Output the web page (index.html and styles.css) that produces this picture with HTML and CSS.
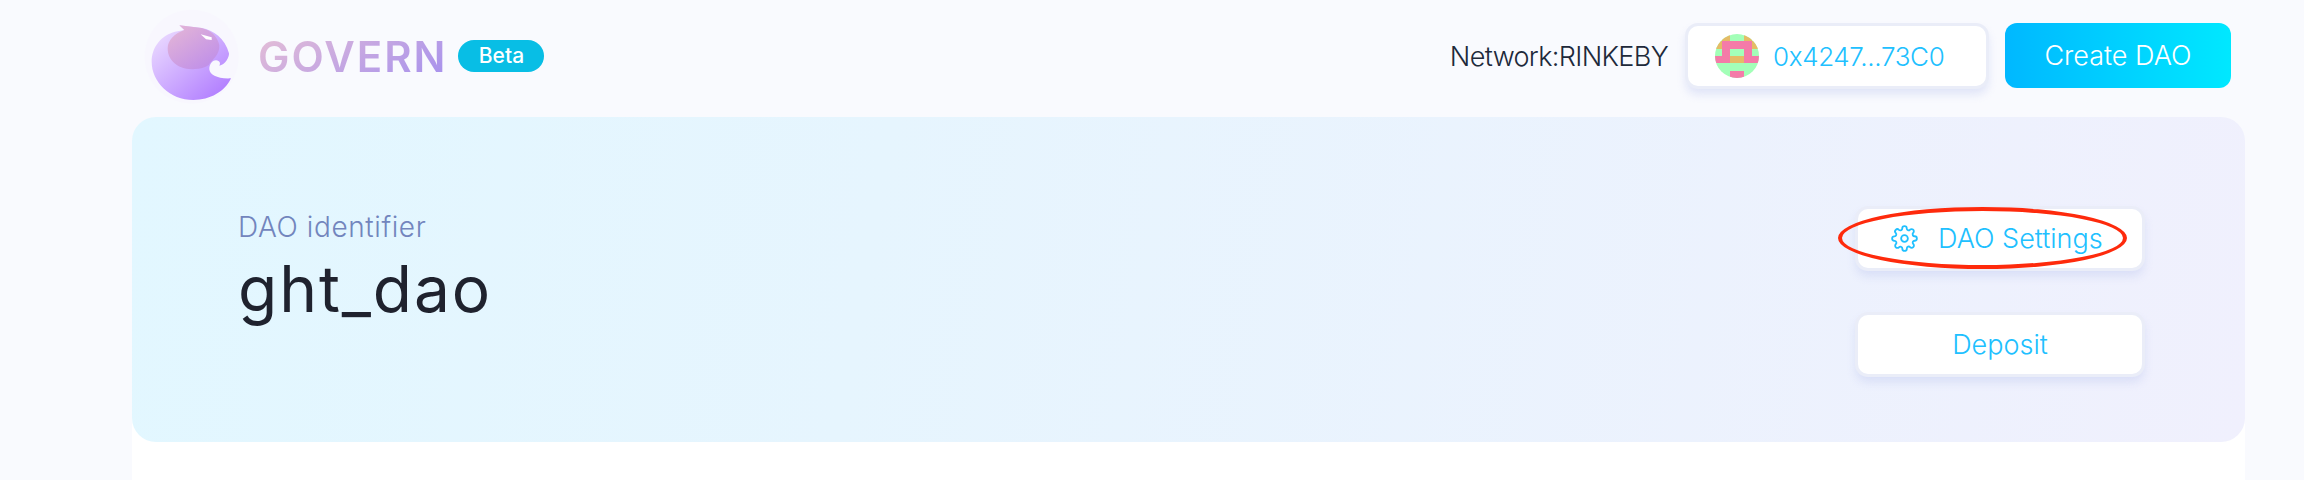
FILE: index.html
```html
<!DOCTYPE html>
<html lang="en">
<head>
<meta charset="utf-8">
<title>Govern</title>
<link rel="stylesheet" href="styles.css">
</head>
<body>
<div class="page">
  <header class="topbar">
    <div class="brand">
      <svg class="logo" viewBox="30 24 300 300" aria-hidden="true">
        <defs>
          <linearGradient id="sphere" x1="0.1" y1="0.15" x2="0.85" y2="0.95">
            <stop offset="0" stop-color="#e8d6ff"/>
            <stop offset="1" stop-color="#b27fff"/>
          </linearGradient>
          <linearGradient id="head" x1="0.1" y1="0" x2="0.9" y2="1">
            <stop offset="0" stop-color="#e4b6d6"/>
            <stop offset="1" stop-color="#bd8cea"/>
          </linearGradient>
        </defs>
        <circle cx="185" cy="170" r="141" fill="#f8f7fe"/>
        <path fill="url(#sphere)" d="M148 76 L215 84 C250 90 285 115 297 160 C298 172 285 195 268 197 C272 190 270 182 258 181 C245 181 238 195 238 208 C240 225 262 237 303 235 C285 275 240 300 190 300 C120 300 65 245 65 185 C65 140 95 105 135 95 L163 90 Z"/>
        <path fill="url(#head)" d="M148 76 L215 84 C245 92 262 110 268 135 C270 165 245 180 236 195 C225 203 210 207 195 207 C150 212 113 185 113 145 C113 120 135 100 163 90 Z"/>
        <path fill="#fff" d="M212 103 L245 112 L245 120 L228 118 Z"/>
      </svg>
      <span class="wordmark">GOVERN</span>
      <span class="beta">Beta</span>
    </div>
    <div class="actions">
      <span class="network">Network:RINKEBY</span>
      <button class="btn wallet">
        <svg class="avatar" viewBox="0 0 6 6" aria-hidden="true" shape-rendering="crispEdges">
          <rect width="6" height="6" fill="#a3ffb8"/>
          <path fill="#e5bc66" d="M1 0h1v1H1zM4 0h1v1H4zM0 1h1v1H0zM5 1h1v1H5zM2 3h2v1H2z"/>
          <path fill="#f47ba8" d="M1 1h4v1H1zM1 2h1v1H1zM4 2h1v1H4zM0 3h2v1H0zM4 3h2v1H4zM2 5h2v1H2z"/>
        </svg>
        <span>0x4247...73C0</span>
      </button>
      <button class="create">Create DAO</button>
    </div>
  </header>
  <main class="content">
    <section class="panel">
      <div class="identity">
        <div class="label">DAO identifier</div>
        <h1 class="dao-name">ght_dao</h1>
      </div>
      <div class="panel-actions">
        <button class="btn panel-btn settings">
          <svg class="gear" viewBox="0 0 24 24" fill="none" stroke="currentColor" stroke-width="1.6" stroke-linecap="round" stroke-linejoin="round" aria-hidden="true">
            <circle cx="12" cy="12" r="3"/>
            <path d="M19.4 15a1.65 1.65 0 0 0 .33 1.82l.06.06a2 2 0 1 1-2.83 2.83l-.06-.06a1.65 1.65 0 0 0-2.82 1.17V21a2 2 0 1 1-4 0v-.09A1.65 1.65 0 0 0 9 19.4a1.65 1.65 0 0 0-1.82.33l-.06.06a2 2 0 1 1-2.83-2.83l.06-.06a1.65 1.65 0 0 0-1.17-2.82H3a2 2 0 1 1 0-4h.09A1.65 1.65 0 0 0 4.6 9a1.65 1.65 0 0 0-.33-1.82l-.06-.06a2 2 0 1 1 2.83-2.83l.06.06A1.65 1.65 0 0 0 9 4.6h.09A1.65 1.65 0 0 0 10 3.09V3a2 2 0 1 1 4 0v.09a1.65 1.65 0 0 0 2.82 1.17l.06-.06a2 2 0 1 1 2.83 2.83l-.06.06A1.65 1.65 0 0 0 19.4 9v.09A1.65 1.65 0 0 0 20.91 10H21a2 2 0 1 1 0 4h-.09A1.65 1.65 0 0 0 19.4 15z"/>
          </svg>
          <span>DAO Settings</span>
          <span class="annotation"></span>
        </button>
        <button class="btn panel-btn">Deposit</button>
      </div>
    </section>
  </main>
</div>
</body>
</html>
```
FILE: styles.css
```css
* { box-sizing: border-box; }
html, body { margin: 0; height: 100%; }
body {
  background: #f9fafe;
  font-family: Inter, "Liberation Sans", sans-serif;
  overflow: hidden;
}
.page {
  height: 480px;
  display: flex;
  flex-direction: column;
  padding: 0 59px 0 132px;
}
.topbar {
  height: 117px;
  flex: none;
  display: flex;
  align-items: center;
  justify-content: space-between;
  padding: 0 14px 5px 8px;
}
.brand { display: flex; align-items: center; }
.logo { width: 100px; height: 100px; flex: none; margin-top: 4px; }
.wordmark {
  margin: 1px 0 0 18px;
  font-size: 42px;
  line-height: 50px;
  font-weight: 600;
  letter-spacing: 2px;
  background: linear-gradient(150deg, #e6bfd6 0%, #a48fee 100%);
  -webkit-background-clip: text;
  background-clip: text;
  color: transparent;
}
.beta {
  margin-left: 11px;
  width: 86px;
  height: 32px;
  border-radius: 16px;
  background: #08bee5;
  color: #fff;
  font-size: 21px;
  font-weight: 500;
  line-height: 32px;
  text-align: center;
}
.actions { display: flex; align-items: center; }
.network {
  font-size: 27px;
  font-weight: 300;
  color: #20293a;
  letter-spacing: -0.65px;
}
button { font-family: inherit; border: 0; cursor: pointer; }
.btn {
  background: #fff;
  color: #20c0ff;
  font-size: 27px;
  font-weight: 300;
  border-radius: 10px;
  box-shadow: 0 0 0 3px #eaedf8, 0 6px 10px 2px rgba(190, 200, 240, 0.45);
}
.wallet {
  margin-left: 20px;
  width: 298px;
  height: 60px;
  padding: 0 0 0 27px;
  display: flex;
  align-items: center;
  gap: 14px;
  font-size: 26px;
  letter-spacing: -0.35px;
}
.avatar { width: 44px; height: 44px; border-radius: 50%; flex: none; }
.create {
  margin: 0 0 1px 19px;
  width: 226px;
  height: 65px;
  border-radius: 12px;
  background: linear-gradient(90deg, #00b8ff, #00e8ff);
  color: #fff;
  font-size: 27px;
  font-weight: 300;
}
.content {
  flex: 1;
  background: linear-gradient(to bottom, transparent 100px, #fff 100px);
}
.panel {
  height: 325px;
  border-radius: 24px;
  background: linear-gradient(100deg, #e2f7ff 0%, #e6f5fe 35%, #f0f0fd 100%);
  display: flex;
  justify-content: space-between;
  padding: 92px 103px 0 106px;
}
.label {
  margin-top: 1px;
  font-size: 28px;
  font-weight: 300;
  line-height: 34px;
  letter-spacing: 0.6px;
  color: #7285bd;
}
.dao-name {
  margin: 9px 0 0;
  font-size: 64px;
  font-weight: 400;
  line-height: 72px;
  letter-spacing: 1.9px;
  color: #1f222e;
}
.panel-actions {
  display: flex;
  flex-direction: column;
  gap: 47px;
}
.panel-btn {
  width: 284px;
  height: 59px;
}
.settings {
  position: relative;
  display: flex;
  align-items: center;
  padding-left: 33px;
  gap: 20px;
}
.gear { width: 27px; height: 27px; flex: none; }
.annotation {
  position: absolute;
  left: -20px;
  top: -2px;
  width: 289px;
  height: 62px;
  border: 4px solid #fe2a0c;
  border-radius: 50%;
}
```
